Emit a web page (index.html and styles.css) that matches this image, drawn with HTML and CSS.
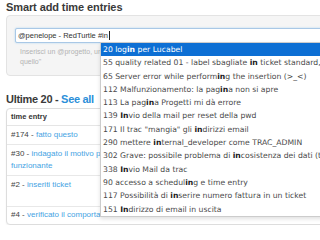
FILE: index.html
```html
<!DOCTYPE html>
<html>
<head>
<meta charset="utf-8">
<link rel="stylesheet" href="styles.css">
</head>
<body>
<div class="page">
  <h2 class="title">Smart add time entries</h2>
  <div class="well">
    <div class="input"><span class="value">@penelope - RedTurtle #in</span><span class="caret"></span></div>
    <p class="help">Inserisci un @progetto, un #ticket e una descrizione di cosa hai fatto, ad es. "ho fatto<br>quello"</p>
  </div>
  <h2 class="title recent">Ultime 20 - <a class="see-all" href="#">See all</a></h2>
  <div class="card">
    <table class="entries">
      <thead>
        <tr><th class="col-entry">time entry</th><th>commento</th></tr>
      </thead>
      <tbody>
        <tr><td>#174 - <a href="#">fatto questo</a></td><td></td></tr>
        <tr><td>#30 - <a href="#">indagato il motivo per cui la mail non era funzionante</a></td><td>1h</td></tr>
        <tr><td>#2 - <a href="#">inseriti ticket</a></td><td>0.5h<br>ticket</td></tr>
        <tr><td>#4 - <a href="#">verificato il comportamento</a></td><td></td></tr>
      </tbody>
    </table>
  </div>
  <ul class="menu">
    <li class="active">20 log<b>in</b> per Lucabel</li>
    <li>55 quality related 01 - label sbagliate <b>in</b> ticket standard, ma</li>
    <li>65 Server error while perform<b>in</b>g the insertion (&gt;_&lt;)</li>
    <li>112 Malfunzionamento: la pag<b>in</b>a non si apre</li>
    <li>113 La pag<b>in</b>a Progetti mi dà errore</li>
    <li>139 <b>In</b>vio della mail per reset della pwd</li>
    <li>171 Il trac "mangia" gli <b>in</b>dirizzi email</li>
    <li>290 mettere <b>in</b>ternal_developer come TRAC_ADMIN</li>
    <li>302 Grave: possibile problema di <b>in</b>cosistenza dei dati (ticket)</li>
    <li>338 <b>In</b>vio Mail da trac</li>
    <li>90 accesso a schedul<b>in</b>g e time entry</li>
    <li>117 Possibilità di <b>in</b>serire numero fattura in un ticket</li>
    <li>151 <b>In</b>dirizzo di email in uscita</li>
  </ul>
</div>
</body>
</html>
```

FILE: styles.css
```css
html, body {
  margin: 0;
  padding: 0;
  overflow: hidden;
  background: #ffffff;
}

.page {
  position: relative;
  width: 480px;
  padding-left: 6px;
  font-family: "Liberation Sans", Arial, sans-serif;
  color: #333333;
}

.title {
  margin: 0;
  padding-top: 1px;
  font-size: 11px;
  line-height: 13px;
  font-weight: bold;
  color: #3a3a3a;
  letter-spacing: -0.1px;
}

.title.recent {
  margin-top: 16px;
  letter-spacing: -0.3px;
}

.see-all {
  color: #2b8fd9;
  text-decoration: none;
}

.well {
  margin-top: 1px;
  background: #f5f5f5;
  border: 1px solid #e3e3e3;
  border-radius: 4px;
  padding: 12px 8px 8px 8px;
}

.input {
  display: flex;
  align-items: center;
  height: 13px;
  background: #ffffff;
  border: 1px solid #a9c8e6;
  border-radius: 2px;
  box-shadow: 0 0 2px rgba(82, 168, 236, 0.45);
  padding-left: 2px;
  font-size: 7.5px;
  color: #333333;
}

.caret {
  display: inline-block;
  width: 1px;
  height: 9px;
  margin-left: 1px;
  background: #222222;
}

.help {
  margin: 4px 0 0 5px;
  font-size: 7px;
  line-height: 10px;
  color: #b3b3b3;
}

.card {
  margin-top: 2px;
  background: #ffffff;
  border: 1px solid #dddddd;
  border-radius: 4px;
  box-shadow: 0 1px 2px rgba(0, 0, 0, 0.06);
  overflow: hidden;
}

.entries {
  border-collapse: collapse;
  width: 100%;
}

.entries th {
  text-align: left;
  font-size: 7.5px;
  line-height: 10px;
  padding: 3px 4px;
  font-weight: bold;
  color: #333333;
  border-bottom: 1px solid #e5e5e5;
}

.entries .col-entry {
  width: 180px;
}

.entries td {
  font-size: 8px;
  line-height: 12px;
  padding: 3px 4px;
  vertical-align: top;
  color: #444444;
  border-bottom: 1px solid #e8e8e8;
}

.entries tr:last-child td {
  border-bottom: none;
  padding-top: 2px;
}

.entries a {
  color: #45a3e3;
  text-decoration: none;
}

.menu {
  position: absolute;
  left: 100px;
  top: 42px;
  width: 300px;
  margin: 0;
  padding: 0;
  list-style: none;
  background: #ffffff;
  border: 1px solid #cccccc;
  box-shadow: 0 2px 4px rgba(0, 0, 0, 0.12);
  font-family: "DejaVu Sans", Verdana, sans-serif;
  font-size: 7.7px;
  color: #4a4a4a;
}

.menu li {
  height: 13.3px;
  line-height: 13.3px;
  padding-left: 2px;
  white-space: nowrap;
}

.menu b {
  color: #1a1a1a;
}

.menu li.active {
  background: #0d6fd4;
  color: #ffffff;
}

.menu li.active b {
  color: #ffffff;
}
```
